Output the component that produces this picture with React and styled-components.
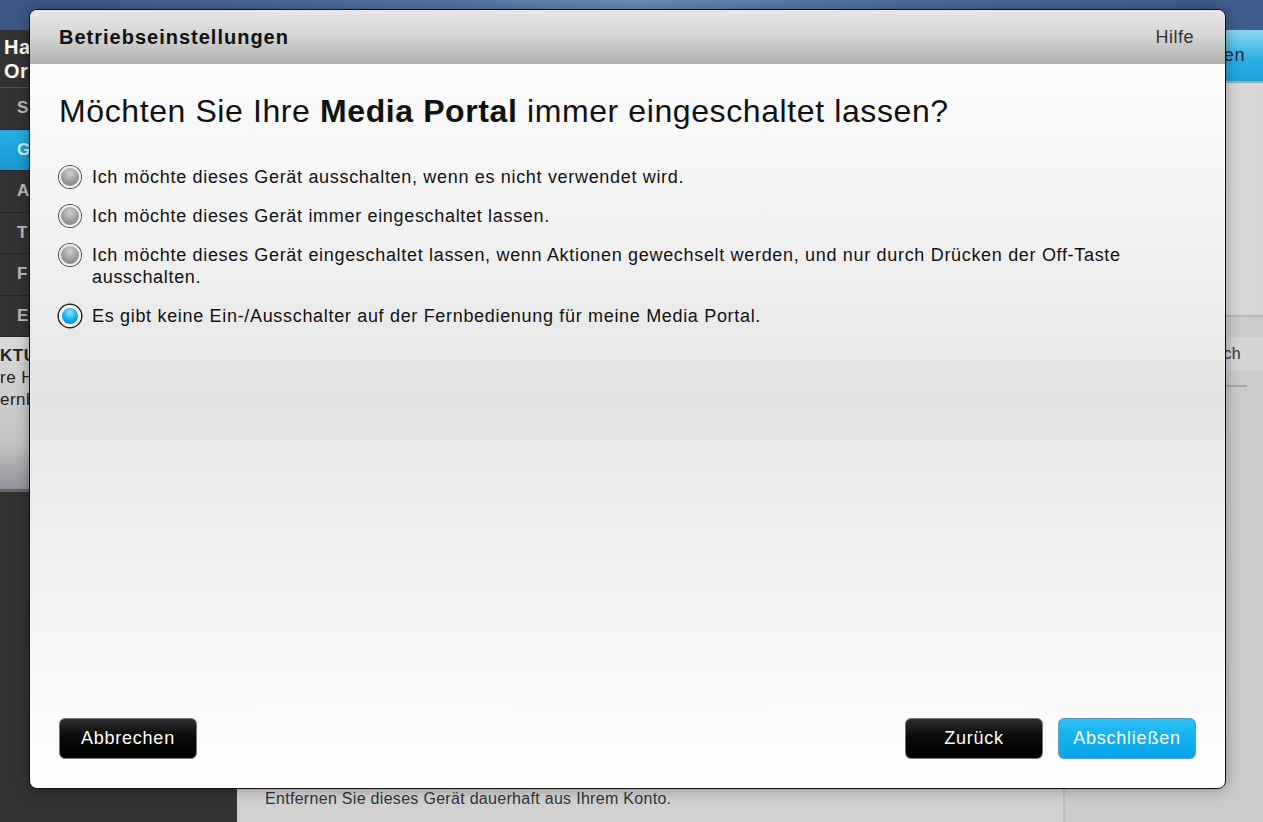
import React, { useState } from "react";
import styled, { createGlobalStyle, css } from "styled-components";

const GlobalStyle = createGlobalStyle`
  html, body {
    margin: 0;
    padding: 0;
    width: 1263px;
    height: 822px;
    overflow: hidden;
    font-family: "Liberation Sans", Arial, sans-serif;
  }
  * { box-sizing: border-box; }
`;

//Start Styles

const Page = styled.div`
  position: relative;
  width: 1263px;
  height: 822px;
  display: flex;
  flex-direction: column;
  background: #cfcfd0;
`;

const TopBar = styled.div`
  height: 30px;
  flex-shrink: 0;
  background: linear-gradient(100deg, #3e5685 0%, #5876a3 35%, #6e8fb8 50%, #52709f 70%, #3f5a8a 100%);
`;

const Columns = styled.div`
  flex: 1;
  display: flex;
`;

const Sidebar = styled.div`
  width: 237px;
  background: #333333;
  display: flex;
  flex-direction: column;
`;

const SideHeader = styled.div`
  height: 58px;
  padding: 5px 4px;
  color: #fff;
  font-weight: bold;
  font-size: 20px;
  line-height: 24px;
  letter-spacing: 0.5px;
  border-bottom: 1px solid #555;
`;

const SideItem = styled.div`
  height: 41.5px;
  display: flex;
  align-items: center;
  padding-left: 17px;
  font-size: 17px;
  font-weight: bold;
  color: #bcbcbc;
  border-bottom: 1px solid #252525;
  ${({ active }) =>
    active &&
    css`
      background: linear-gradient(#26aee4, #1a98d2);
      color: #d8f1fc;
    `}
`;

const NewsPanel = styled.div`
  height: 155px;
  padding: 8px 0 0 0;
  background: linear-gradient(#d9d9d9, #c4c4c4 70%, #8f9299);
  color: #222;
  font-size: 17px;
  line-height: 22px;
  letter-spacing: 0.5px;
  border-bottom: 3px solid #666;
  b { font-weight: bold; }
`;

const Main = styled.div`
  flex: 1;
  background: #d0d0d0;
  border-right: 2px solid #bdbdbd;
  display: flex;
  flex-direction: column;
  justify-content: flex-end;
`;

const MainNote = styled.div`
  padding: 0 0 14px 28px;
  font-size: 16px;
  letter-spacing: 0.3px;
  color: #333;
`;

const RightCol = styled.div`
  width: 198px;
  background: #cbcbcd;
  display: flex;
  flex-direction: column;
`;

const RightButton = styled.div`
  height: 53px;
  background: linear-gradient(#8ad6f2, #2aaee2 60%, #1ea2da);
  color: #123;
  font-size: 18px;
  letter-spacing: 0.6px;
  display: flex;
  align-items: center;
  justify-content: flex-end;
  padding-right: 18px;
  border-bottom: 2px solid #a8a8a8;
`;

const RightPanel = styled.div`
  height: 234px;
  background: linear-gradient(90deg, #e2e2e2, #d6d6d6);
  border-bottom: 2px solid #b8b8b8;
`;

const RightTab = styled.div`
  margin-top: 20px;
  height: 34px;
  background: #d3d3d5;
  display: flex;
  align-items: center;
  justify-content: flex-end;
  padding-right: 22px;
  font-size: 16px;
  letter-spacing: 0.3px;
  color: #333;
`;

const RightRule = styled.div`
  margin: 14px 16px 0 auto;
  width: 40px;
  border-top: 2px solid #a8a8a8;
`;

const Dialog = styled.div`
  position: absolute;
  left: 29px;
  top: 9px;
  width: 1197px;
  height: 780px;
  border: 1px solid #111;
  border-radius: 8px;
  overflow: hidden;
  box-shadow: 0 0 14px rgba(0, 0, 0, 0.35);
  display: flex;
  flex-direction: column;
  background: linear-gradient(#ffffff 0%, #f1f1f1 30%, #e4e4e4 50%, #f3f3f3 75%, #ffffff 100%);
`;

const DialogHeader = styled.div`
  height: 54px;
  flex-shrink: 0;
  display: flex;
  align-items: center;
  justify-content: space-between;
  padding: 0 31px 0 29px;
  background: linear-gradient(#e6e6e6, #d6d6d6 45%, #b0b0b0);
`;

const DialogTitle = styled.div`
  font-size: 20px;
  font-weight: bold;
  letter-spacing: 1px;
  color: #111;
`;

const HelpLink = styled.div`
  font-size: 18px;
  letter-spacing: 0.5px;
  color: #333;
`;

const DialogBody = styled.div`
  flex: 1;
  padding: 28px 29px 0 29px;
`;

const Question = styled.h1`
  margin: 0 0 36px 0;
  font-size: 32px;
  font-weight: normal;
  letter-spacing: 0.6px;
  color: #111;
  line-height: 38px;
  b { font-weight: bold; }
`;

const OptionList = styled.div`
  display: flex;
  flex-direction: column;
  gap: 17px;
`;

const Option = styled.label`
  display: flex;
  align-items: flex-start;
  gap: 11px;
  font-size: 18px;
  line-height: 22px;
  letter-spacing: 0.68px;
  color: #111;
  cursor: pointer;
`;

const Radio = styled.span`
  width: 22px;
  height: 22px;
  flex-shrink: 0;
  border-radius: 50%;
  border: 2px solid #ededed;
  box-shadow: 0 0 0 1px #4a4a4a;
  background: radial-gradient(circle at 50% 30%, #d0d0d0 0%, #9a9a9a 55%, #7a7a7a 100%);
  ${({ checked }) =>
    checked &&
    css`
      border: 3px solid #f4f4f4;
      box-shadow: 0 0 0 1.5px #222;
      background: radial-gradient(circle at 50% 30%, #8fe3ff 0%, #10a9e8 55%, #0676b8 100%);
    `}
`;

const DialogFooter = styled.div`
  display: flex;
  align-items: center;
  padding: 0 29px 29px 29px;
  gap: 15px;
`;

const Spacer = styled.div`
  flex: 1;
`;

const Button = styled.button`
  width: 138px;
  height: 41px;
  border-radius: 6px;
  border: 1px solid #6f7a85;
  font-family: "Liberation Sans", Arial, sans-serif;
  font-size: 18px;
  letter-spacing: 0.75px;
  color: #fff;
  cursor: pointer;
  background: linear-gradient(#2e2e2e 0%, #0a0a0a 45%, #000 100%);
  ${({ primary }) =>
    primary &&
    css`
      border-color: #5a9ec6;
      background: linear-gradient(#2fbdf3 0%, #13b0ee 50%, #07a5e6 100%);
    `}
`;

//End Styles

const options = [
  "Ich möchte dieses Gerät ausschalten, wenn es nicht verwendet wird.",
  "Ich möchte dieses Gerät immer eingeschaltet lassen.",
  "Ich möchte dieses Gerät eingeschaltet lassen, wenn Aktionen gewechselt werden, und nur durch Drücken der Off-Taste ausschalten.",
  "Es gibt keine Ein-/Ausschalter auf der Fernbedienung für meine Media Portal.",
];

const App = () => {
  const [selected, setSelected] = useState(3);

  return (
    <>
      <GlobalStyle />
      <Page>
        <TopBar />
        <Columns>
          <Sidebar>
            <SideHeader>
              Ha
              <br />
              Or
            </SideHeader>
            <SideItem>S</SideItem>
            <SideItem active>G</SideItem>
            <SideItem>A</SideItem>
            <SideItem>T</SideItem>
            <SideItem>F</SideItem>
            <SideItem>E</SideItem>
            <NewsPanel>
              <b>KTU</b>
              <br />
              re H
              <br />
              ernb
            </NewsPanel>
          </Sidebar>
          <Main>
            <MainNote>Entfernen Sie dieses Gerät dauerhaft aus Ihrem Konto.</MainNote>
          </Main>
          <RightCol>
            <RightButton>en</RightButton>
            <RightPanel />
            <RightTab>ch</RightTab>
            <RightRule />
          </RightCol>
        </Columns>

        <Dialog>
          <DialogHeader>
            <DialogTitle>Betriebseinstellungen</DialogTitle>
            <HelpLink>Hilfe</HelpLink>
          </DialogHeader>
          <DialogBody>
            <Question>
              Möchten Sie Ihre <b>Media Portal</b> immer eingeschaltet lassen?
            </Question>
            <OptionList>
              {options.map((text, index) => (
                <Option key={index} onClick={() => setSelected(index)}>
                  <Radio checked={selected === index} />
                  <span>{text}</span>
                </Option>
              ))}
            </OptionList>
          </DialogBody>
          <DialogFooter>
            <Button>Abbrechen</Button>
            <Spacer />
            <Button>Zurück</Button>
            <Button primary>Abschließen</Button>
          </DialogFooter>
        </Dialog>
      </Page>
    </>
  );
};

export default App;
